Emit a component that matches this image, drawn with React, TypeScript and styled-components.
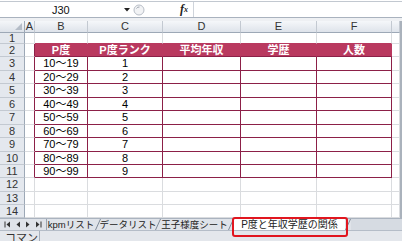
import React from "react";
import styled, { createGlobalStyle, css } from "styled-components";

const PINK = "#b9395f";
const CRIMSON = "#8c2048";
const GRID = "#dadcdf";
const HDR_LINE = "#c3c9d1";
const HDR_EDGE = "#9da8b6";
const FONT = `"Liberation Sans", "Noto Sans CJK JP", sans-serif`;

const ROW_HEIGHTS = [11, 13, 14, 13, 14, 13, 14, 13, 14, 13, 13, 14, 13, 13];
const COLS = ["A", "B", "C", "D", "E", "F", ""];
const HEADERS = ["P度", "P度ランク", "平均年収", "学歴", "人数"];
const RANGES = [
  "10〜19",
  "20〜29",
  "30〜39",
  "40〜49",
  "50〜59",
  "60〜69",
  "70〜79",
  "80〜89",
  "90〜99",
];

const GlobalStyle = createGlobalStyle`
  body {
    margin: 0;
    background: #ffffff;
    font-family: ${FONT};
  }
`;

const Window = styled.div`
  width: 402px;
  height: 241px;
  overflow: hidden;
  display: flex;
  flex-direction: column;
  background: #ffffff;
  padding-top: 1px;
  box-sizing: border-box;
`;

const FormulaBar = styled.div`
  display: flex;
  align-items: stretch;
  height: 17px;
  box-sizing: border-box;
  border-top: 1px solid #c2c8d0;
  border-bottom: 1px solid #a9b2be;
  background: #ffffff;
`;

const NameBox = styled.div`
  width: 122px;
  display: flex;
  align-items: center;
  padding: 1px 0 0 52px;
  box-sizing: border-box;
  font-size: 11px;
  color: #111;
`;

const Arrow = styled.div`
  width: 11px;
  display: flex;
  align-items: center;
  justify-content: flex-start;
  padding-left: 2px;
  box-sizing: border-box;
`;

const Handle = styled.div`
  width: 14px;
  display: flex;
  align-items: center;
`;

const FxSlot = styled.div`
  flex: 0 0 46px;
  display: flex;
  align-items: center;
  justify-content: flex-end;
  padding-right: 5px;
  box-sizing: border-box;
  font-family: "Liberation Serif", serif;
  font-style: italic;
  font-weight: bold;
  font-size: 12px;
  color: #222;
  sub {
    font-size: 8px;
    vertical-align: -1px;
  }
`;

const FormulaInput = styled.div`
  flex: 1;
  border-left: 1px solid #cfd4db;
`;

const Band = styled.div`
  height: 3px;
  background: #eef0f3;
`;

const Sheet = styled.div`
  display: grid;
  grid-template-columns: 25px 10px 53px 75px 78px 76px 75px 1fr;
  grid-template-rows: 12px ${ROW_HEIGHTS.join("px ")}px;
  border-right: 2px solid #aab2bc;
`;

type Variant = "corner" | "colhdr" | "rowhdr" | "plain" | "head" | "body";

const variants: Record<Variant, ReturnType<typeof css>> = {
  corner: css`
    background: linear-gradient(#f4f6f9, #dde2e9);
    border-right-color: ${HDR_EDGE};
    border-bottom-color: ${HDR_EDGE};
    justify-content: flex-end;
    align-items: flex-end;
    padding: 0 2px 2px 0;
  `,
  colhdr: css`
    background: linear-gradient(#f5f7fa, #dee3ea);
    border-right-color: ${HDR_LINE};
    border-bottom-color: ${HDR_EDGE};
    color: #333;
  `,
  rowhdr: css`
    background: #e4e8ee;
    border-right-color: ${HDR_EDGE};
    border-bottom-color: ${HDR_LINE};
    color: #333;
  `,
  plain: css``,
  head: css`
    background: ${PINK};
    border-right-color: ${PINK};
    border-bottom-color: ${CRIMSON};
    color: #fff;
    font-weight: bold;
  `,
  body: css`
    border-right-color: ${CRIMSON};
    border-bottom-color: ${CRIMSON};
    color: #000;
  `,
};

const Cell = styled.div<{ $v: Variant; $edge?: boolean; $top?: boolean }>`
  box-sizing: border-box;
  display: flex;
  align-items: center;
  justify-content: center;
  border-right: 1px solid ${GRID};
  border-bottom: 1px solid ${GRID};
  font-size: 11px;
  line-height: 1;
  white-space: nowrap;
  overflow: hidden;
  ${({ $v }) => variants[$v]}
  ${({ $edge }) =>
    $edge &&
    css`
      border-right-color: ${CRIMSON};
    `}
  ${({ $top }) =>
    $top &&
    css`
      border-bottom-color: ${PINK};
    `}
`;

const TabBar = styled.div`
  display: flex;
  align-items: stretch;
  height: 11px;
  box-sizing: content-box;
  border-top: 1px solid #aab3bf;
  background: #dfe3e9;
  font-size: 9.5px;
  color: #222;
`;

const NavButtons = styled.div`
  width: 47px;
  display: flex;
  align-items: center;
  justify-content: space-around;
  padding: 0 2px;
  box-sizing: border-box;
  border-right: 1px solid #9aa4b1;
`;

const Tab = styled.div<{ $w: number; $active?: boolean }>`
  position: relative;
  width: ${({ $w }) => $w}px;
  display: flex;
  align-items: center;
  justify-content: center;
  white-space: nowrap;
  line-height: 1;
  ${({ $active }) =>
    $active &&
    css`
      background: #ffffff;
      font-size: 10px;
      &::after {
        content: "";
        position: absolute;
        left: -2px;
        right: -3px;
        top: -2px;
        bottom: -7px;
        border: 2px solid #e1161f;
        border-radius: 3px;
        z-index: 2;
      }
    `}
`;

const Slant = styled.div`
  width: 6px;
  display: flex;
  align-items: stretch;
`;

const TabRest = styled.div`
  flex: 1;
  background: #d6dbe2;
`;

const StatusBar = styled.div`
  flex: 1;
  display: flex;
  border-top: 1px solid #b5bdc8;
  background: #e4e7ec;
  overflow: hidden;
`;

const StatusText = styled.div`
  width: 40px;
  padding: 2px 0 0 5px;
  box-sizing: border-box;
  font-size: 11px;
  line-height: 11px;
  color: #333;
  border-right: 1px solid #a6afbb;
`;

const SlantLine = () => (
  <Slant>
    <svg width="6" height="11" viewBox="0 0 6 11">
      <line x1="0.5" y1="11" x2="5.5" y2="0" stroke="#7f8a98" strokeWidth="1" />
    </svg>
  </Slant>
);

const NavIcon = ({ dir, bar }: { dir: "l" | "r"; bar?: boolean }) => (
  <svg width="7" height="7" viewBox="0 0 7 7">
    {dir === "l" ? (
      <>
        {bar && <rect x="0.5" y="0.5" width="1" height="6" fill="#333" />}
        <polygon points="6,0.5 6,6.5 2.5,3.5" fill="#333" />
      </>
    ) : (
      <>
        <polygon points="1,0.5 1,6.5 4.5,3.5" fill="#333" />
        {bar && <rect x="5.5" y="0.5" width="1" height="6" fill="#333" />}
      </>
    )}
  </svg>
);

const App = () => {
  const rows: React.ReactNode[] = [];

  // column header row
  rows.push(
    <Cell key="corner" $v="corner">
      <svg width="7" height="7" viewBox="0 0 7 7">
        <polygon points="7,0 7,7 0,7" fill="#b4bcc7" />
      </svg>
    </Cell>,
  );
  COLS.forEach(c =>
    rows.push(
      <Cell key={`h-${c || "g"}`} $v="colhdr">
        {c}
      </Cell>,
    ),
  );

  ROW_HEIGHTS.forEach((_, i) => {
    const r = i + 1;
    const inTable = r >= 2 && r <= 11;
    rows.push(
      <Cell key={`r-${r}`} $v="rowhdr">
        {r}
      </Cell>,
    );
    // column A
    rows.push(<Cell key={`a-${r}`} $v="plain" $edge={inTable} />);
    for (let c = 0; c < 5; c++) {
      let content: React.ReactNode = null;
      let v: Variant = "plain";
      if (r === 2) {
        v = "head";
        content = HEADERS[c];
      } else if (inTable) {
        v = "body";
        if (c === 0) content = RANGES[r - 3];
        if (c === 1) content = r - 2;
      }
      rows.push(
        <Cell key={`c-${r}-${c}`} $v={v} $top={r === 1}>
          {content}
        </Cell>,
      );
    }
    rows.push(<Cell key={`g-${r}`} $v="plain" />);
  });

  return (
    <>
      <GlobalStyle />
      <Window>
        <FormulaBar>
          <NameBox>J30</NameBox>
          <Arrow>
            <svg width="6" height="4" viewBox="0 0 6 4">
              <polygon points="0,0 6,0 3,3.5" fill="#222" />
            </svg>
          </Arrow>
          <Handle>
            <svg width="12" height="12" viewBox="0 0 12 12">
              <circle cx="6" cy="6" r="5" fill="#f2f3f5" stroke="#b8bec7" />
              <path d="M3.5 4.5 A3 3 0 0 1 6.5 3" fill="none" stroke="#9aa2ad" />
            </svg>
          </Handle>
          <FxSlot>
            f<sub>x</sub>
          </FxSlot>
          <FormulaInput />
        </FormulaBar>
        <Band />
        <Sheet>{rows}</Sheet>
        <TabBar>
          <NavButtons>
            <NavIcon dir="l" bar />
            <NavIcon dir="l" />
            <NavIcon dir="r" />
            <NavIcon dir="r" bar />
          </NavButtons>
          <Tab $w={48}>kpmリスト</Tab>
          <SlantLine />
          <Tab $w={54}>データリスト</Tab>
          <SlantLine />
          <Tab $w={67}>王子様度シート</Tab>
          <SlantLine />
          <Tab $w={111} $active>
            P度と年収学歴の関係
          </Tab>
          <SlantLine />
          <TabRest />
        </TabBar>
        <StatusBar>
          <StatusText>コマンド</StatusText>
        </StatusBar>
      </Window>
    </>
  );
};

export default App;
